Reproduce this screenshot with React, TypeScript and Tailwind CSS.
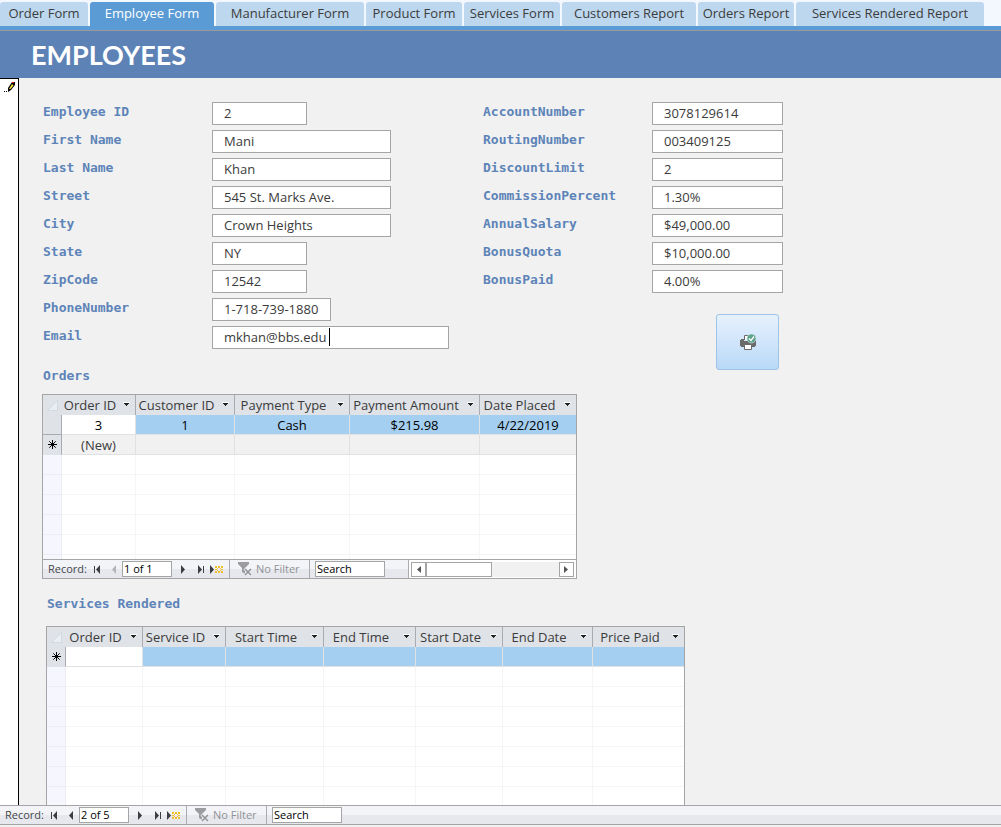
import React from "react";

type Column = { name: string; width: string };

const tabs = [
  { name: "Order Form", width: "w-[88px]" },
  { name: "Employee Form", width: "w-[124px]", active: true },
  { name: "Manufacturer Form", width: "w-[148px]" },
  { name: "Product Form", width: "w-[96px]" },
  { name: "Services Form", width: "w-[96px]" },
  { name: "Customers Report", width: "w-[134px]" },
  { name: "Orders Report", width: "w-[96px]" },
  { name: "Services Rendered Report", width: "w-[188px]" },
];

const personal = [
  { label: "Employee ID", value: "2", width: "w-[95px]" },
  { label: "First Name", value: "Mani", width: "w-[179px]" },
  { label: "Last Name", value: "Khan", width: "w-[179px]" },
  { label: "Street", value: "545 St. Marks Ave.", width: "w-[179px]" },
  { label: "City", value: "Crown Heights", width: "w-[179px]" },
  { label: "State", value: "NY", width: "w-[95px]" },
  { label: "ZipCode", value: "12542", width: "w-[95px]" },
  { label: "PhoneNumber", value: "1-718-739-1880", width: "w-[119px]" },
  { label: "Email", value: "mkhan@bbs.edu", width: "w-[237px]", caret: true },
];

const payroll = [
  { label: "AccountNumber", value: "3078129614", width: "w-[131px]" },
  { label: "RoutingNumber", value: "003409125", width: "w-[131px]" },
  { label: "DiscountLimit", value: "2", width: "w-[131px]" },
  { label: "CommissionPercent", value: "1.30%", width: "w-[131px]" },
  { label: "AnnualSalary", value: "$49,000.00", width: "w-[131px]" },
  { label: "BonusQuota", value: "$10,000.00", width: "w-[131px]" },
  { label: "BonusPaid", value: "4.00%", width: "w-[131px]" },
];

const orderColumns: Column[] = [
  { name: "Order ID", width: "w-[74px]" },
  { name: "Customer ID", width: "w-[99px]" },
  { name: "Payment Type", width: "w-[115px]" },
  { name: "Payment Amount", width: "w-[130px]" },
  { name: "Date Placed", width: "w-[96px]" },
];

const serviceColumns: Column[] = [
  { name: "Order ID", width: "w-[77px]" },
  { name: "Service ID", width: "w-[83px]" },
  { name: "Start Time", width: "w-[98px]" },
  { name: "End Time", width: "w-[92px]" },
  { name: "Start Date", width: "w-[87px]" },
  { name: "End Date", width: "w-[90px]" },
  { name: "Price Paid", width: "w-[91px]" },
];

const labelFont = "font-['DejaVu_Sans_Mono',monospace] text-[13px] font-bold text-[#5d84b8]";

function Field({ label, value, width, caret }: { label: string; value: string; width: string; caret?: boolean }) {
  return (
    <div className="flex h-[23px]">
      <label htmlFor={label} className={`w-[169px] shrink-0 leading-[20px] ${labelFont}`}>
        {label}
      </label>
      <div className="relative">
        <input
          id={label}
          defaultValue={value}
          className={`block h-[23px] border border-[#a5a5a5] bg-white pb-[2px] pl-[11px] text-[13px] text-[#3b3b3b] outline-none ${width}`}
        />
        {caret && <span className="absolute top-[2px] left-[117px] h-[18px] w-px bg-black" />}
      </div>
    </div>
  );
}

function NewMark() {
  return (
    <svg viewBox="0 0 9 9" className="mx-auto size-[9px]" stroke="#000" strokeWidth="1" aria-hidden="true">
      <path d="M4.5 0v9M0 4.5h9M1.3 1.3l6.4 6.4M7.7 1.3L1.3 7.7" />
    </svg>
  );
}

function Datasheet({ title, columns, rows, blank, newText }: { title: string; columns: Column[]; rows: string[][]; blank: number; newText: string }) {
  const selectNew = rows.length === 0;
  return (
    <table aria-label={title} className="w-full table-fixed border-separate border-spacing-0 text-center text-[13px] leading-[18px] text-[#3b3b3b]">
      <thead>
        <tr className="h-5 bg-[#dfe2e7]">
          <th className="w-[19px] p-0">
            <svg viewBox="0 0 11 11" className="ml-1 size-[11px]" aria-hidden="true">
              <path d="M10.5 0.5v10H0.5z" fill="#e9eef3" stroke="#cbd2da" strokeWidth=".7" />
            </svg>
          </th>
          {columns.map((c) => (
            <th key={c.name} className={`border-r border-[#a9abb0] p-0 pb-px font-normal last:border-r-0 ${c.width}`}>
              <div className="flex items-center">
                <span className="flex-1 whitespace-nowrap">{c.name}</span>
                <button aria-label={`Sort ${c.name}`} className="flex h-[18px] w-[17px] items-center justify-center">
                  <svg viewBox="0 0 7 5" className="h-[5px] w-[7px]" aria-hidden="true">
                    <path d="M0 0h7v1H0z" fill="#fff" />
                    <path d="M1 1h5v1H5v1H4v1H3V3H2V2H1z" fill="#222" />
                  </svg>
                </button>
              </div>
            </th>
          ))}
        </tr>
      </thead>
      <tbody>
        {rows.map((row, r) => (
          <tr key={r} className="h-5 text-black">
            <td className="border-r border-b border-[#a9abb0] bg-[#dfe2e7] p-0" />
            {row.map((cell, i) => (
              <td key={i} className={`border-r border-b border-[#dfe3e6] p-0 pt-px last:border-r-0 ${i ? "bg-[#a5cff1]" : "bg-white"}`}>
                {cell}
              </td>
            ))}
          </tr>
        ))}
        <tr className="h-5">
          <td className="border-r border-b border-r-[#a9abb0] border-b-[#dfe2e7] bg-[#dfe2e7] p-0">
            <NewMark />
          </td>
          {columns.map((c, i) => (
            <td
              key={c.name}
              className={`border-r border-b border-[#dfe1e3] p-0 pt-px last:border-r-0 ${selectNew ? (i ? "bg-[#a5cff1]" : "bg-white") : "bg-[#f1f1f1]"}`}
            >
              {i === 0 ? newText : ""}
            </td>
          ))}
        </tr>
        {Array.from({ length: blank }, (_, r) => (
          <tr key={r} className="h-5" aria-hidden="true">
            <td className="border-r border-b border-[#ececf2] bg-[#f6f7fe] p-0" />
            {columns.map((c) => (
              <td key={c.name} className="border-r border-b border-[#f5f5f5] bg-white p-0 last:border-r-0" />
            ))}
          </tr>
        ))}
      </tbody>
    </table>
  );
}

function NavButton({ label, width, path, faded, spark }: { label: string; width: string; path: string; faded?: boolean; spark?: boolean }) {
  return (
    <button aria-label={label} className={`flex h-full shrink-0 items-center justify-center ${width}`}>
      <svg viewBox={spark ? "0 0 13 9" : "0 0 9 9"} className={spark ? "h-[9px] w-[13px]" : "size-[9px]"} fill={faded ? "#b4b4b8" : "#3d3d42"} aria-hidden="true">
        <path d={path} />
        {spark && <path d="M5 1h2v2H5zM8 1h2v2H8zM11 1h2v2h-2zM5 4h2v1H5zM11 4h2v1h-2zM5 6h2v2H5zM8 6h2v2H8zM11 6h2v2h-2zM7 3h1v1H7zM10 3h1v1h-1zM7 5h1v1H7zM10 5h1v1h-1z" fill="#f0c02c" />}
      </svg>
    </button>
  );
}

function RecordBar({ position, name, atStart }: { position: string; name: string; atStart?: boolean }) {
  return (
    <div className="flex h-[18px] shrink-0 items-center font-['Open_Sans',sans-serif] text-[11px] text-[#44464a]">
      <label htmlFor={`${name}-position`} className="w-[45px] shrink-0 pl-[5px]">
        Record:
      </label>
      <NavButton label="First record" width="w-[18px]" path="M1 1h1v7H1zM7 0v9L3 4.500z" />
      <NavButton label="Previous record" width="w-4" path="M6 0v9L2 4.500z" faded={atStart} />
      <input
        id={`${name}-position`}
        defaultValue={position}
        className="h-4 w-[50px] shrink-0 border border-[#a5a5a5] bg-white pl-px text-black outline-none"
      />
      <NavButton label="Next record" width="w-5" path="M3 0v9l4-4.500z" />
      <NavButton label="Last record" width="w-4" path="M2 0v9l4-4.500zM7 1h1v7H7z" />
      <NavButton label="New record" width="w-4" path="M0 0v9l4-4.500z" spark />
      <button className="ml-[5px] flex h-full w-[81px] shrink-0 items-center gap-1 border-x border-[#a9abb0] pl-2 text-[#929296]">
        <svg viewBox="0 0 14 14" className="size-[14px]" aria-hidden="true">
          <path d="M0 0h11v2L7 6v6L4 10V6L0 2z" fill="#9c9c9f" />
          <path d="M6.500 6.500l7 7M13.500 6.500l-7 7" stroke="#eceef1" strokeWidth="3" />
          <path d="M7 7l6 6M13 7l-6 6" stroke="#929296" strokeWidth="1.500" />
        </svg>
        <span className="whitespace-nowrap">No Filter</span>
      </button>
      <input
        aria-label={`Search ${name}`}
        defaultValue="Search"
        className="ml-[5px] h-4 w-[70px] shrink-0 border border-[#a5a5a5] bg-white pl-px text-black outline-none"
      />
    </div>
  );
}

function ScrollArrow({ label, path }: { label: string; path: string }) {
  return (
    <button aria-label={label} className="flex h-[15px] w-[15px] shrink-0 items-center justify-center border border-[#a5a5a5] bg-white">
      <svg viewBox="0 0 5 7" className="h-[7px] w-[5px]" fill="#555" aria-hidden="true">
        <path d={path} />
      </svg>
    </button>
  );
}

export default function App() {
  return (
    <div className="flex h-screen flex-col overflow-hidden bg-[#f1f1f1] font-['Open_Sans',sans-serif]">
      <nav className="flex shrink-0 gap-[2px] border-b-4 border-[#5b9bd5] bg-[#f3f8fe] pt-[2px] text-[13px] whitespace-nowrap text-[#3c3c3c]">
        {tabs.map((t) => (
          <a
            key={t.name}
            href="#"
            className={`flex h-6 shrink-0 items-center justify-center rounded-t-[3px] ${t.width} ${t.active ? "bg-[#5b9bd5] text-white" : "bg-[#bdd7ee]"}`}
          >
            {t.name}
          </a>
        ))}
      </nav>
      <header className="flex h-12 shrink-0 items-center border-t border-[#9a9a9e] bg-[#5d82b6] pl-[31px]">
        <h1 className="font-['Lato',sans-serif] text-[27px] leading-[48px] font-bold text-white">EMPLOYEES</h1>
      </header>

      <div className="flex min-h-0 flex-1">
        <div className="w-[19px] shrink-0 border-t border-r border-black bg-white">
          <svg viewBox="0 0 12 12" className="mt-[2px] ml-1 size-3" aria-hidden="true">
            <path d="M0 10h1v1H0zM2 10h1v1H2z" fill="#000" />
            <path d="M4 11V7l4-6h3v3L7 9z" fill="#000" />
            <path d="M5 8l3-5 1.500 1.500L6.500 8z" fill="#f5e63c" />
            <path d="M8 1h2v1H8z" fill="#d22" />
          </svg>
        </div>

        <main className="min-w-0 flex-1 overflow-hidden pt-6 pl-6">
          <div className="flex">
            <div className="flex w-[440px] shrink-0 flex-col gap-[5px]">
              {personal.map((f) => (
                <Field key={f.label} {...f} />
              ))}
              <h2 className={`mt-3 leading-[20px] ${labelFont}`}>Orders</h2>
            </div>
            <div className="flex w-[300px] shrink-0 flex-col gap-[5px]">
              {payroll.map((f) => (
                <Field key={f.label} {...f} />
              ))}
              <button
                aria-label="Print"
                className="mt-4 mr-1 flex h-14 w-[63px] items-center justify-center self-end rounded-[3px] border border-[#9dc3e6] bg-linear-to-b from-[#e7f1fd] to-[#b9d9f8]"
              >
                <svg viewBox="0 0 16 16" className="size-4" aria-hidden="true">
                  <path d="M4.500 6V1.500h6V6" fill="#fff" stroke="#6a6a6a" />
                  <path d="M0 6h1V5h3v2h8V5h3v1h1v6h-1v1H1v-1H0z" fill="#6a6a6a" />
                  <path d="M4.500 10.500h7v5h-7z" fill="#fff" stroke="#6a6a6a" />
                  <circle cx="11.500" cy="4.500" r="4.500" fill="#5fa38a" stroke="#dcebfa" strokeWidth=".6" />
                  <path d="M9 4.500l2 2 3-4" fill="none" stroke="#fff" strokeWidth="1.300" />
                </svg>
              </button>
            </div>
          </div>

          <section className="mt-2 -ml-px flex h-[185px] w-[535px] flex-col border border-[#a5a5a5] bg-white">
            <div className="min-h-0 flex-1 overflow-hidden">
              <Datasheet
                title="Orders"
                columns={orderColumns}
                rows={[["3", "1", "Cash", "$215.98", "4/22/2019"]]}
                blank={6}
                newText="(New)"
              />
            </div>
            <div className="flex border-t border-[#a5a5a5] bg-linear-to-b from-[#f3f4f8] from-50% to-[#e6e8ed] to-50%">
              <RecordBar position="1 of 1" name="orders" atStart />
              <div className="ml-[23px] flex flex-1 items-center border-l border-[#a9abb0] bg-white pr-[2px] pl-[2px]">
                <ScrollArrow label="Scroll left" path="M5 0v7L1 3.500z" />
                <div className="flex flex-1 bg-[#f1f1f1]">
                  <div className="h-[15px] w-[66px] border border-[#a5a5a5] bg-white" />
                </div>
                <ScrollArrow label="Scroll right" path="M0 0v7l4-3.500z" />
              </div>
            </div>
          </section>

          <h2 className={`mt-[15px] mb-3 ml-1 leading-[20px] ${labelFont}`}>Services Rendered</h2>
          <section className="ml-[3px] w-[639px] border border-[#a5a5a5] bg-white">
            <Datasheet title="Services Rendered" columns={serviceColumns} rows={[]} blank={8} newText="" />
          </section>
        </main>
      </div>

      <footer className="shrink-0 border-b-2 border-[#f1f1f1]">
        <div className="border-y border-[#a5a5a5] bg-linear-to-b from-[#f3f4f8] from-50% to-[#e6e8ed] to-50%">
          <RecordBar position="2 of 5" name="employees" />
        </div>
      </footer>
    </div>
  );
}
